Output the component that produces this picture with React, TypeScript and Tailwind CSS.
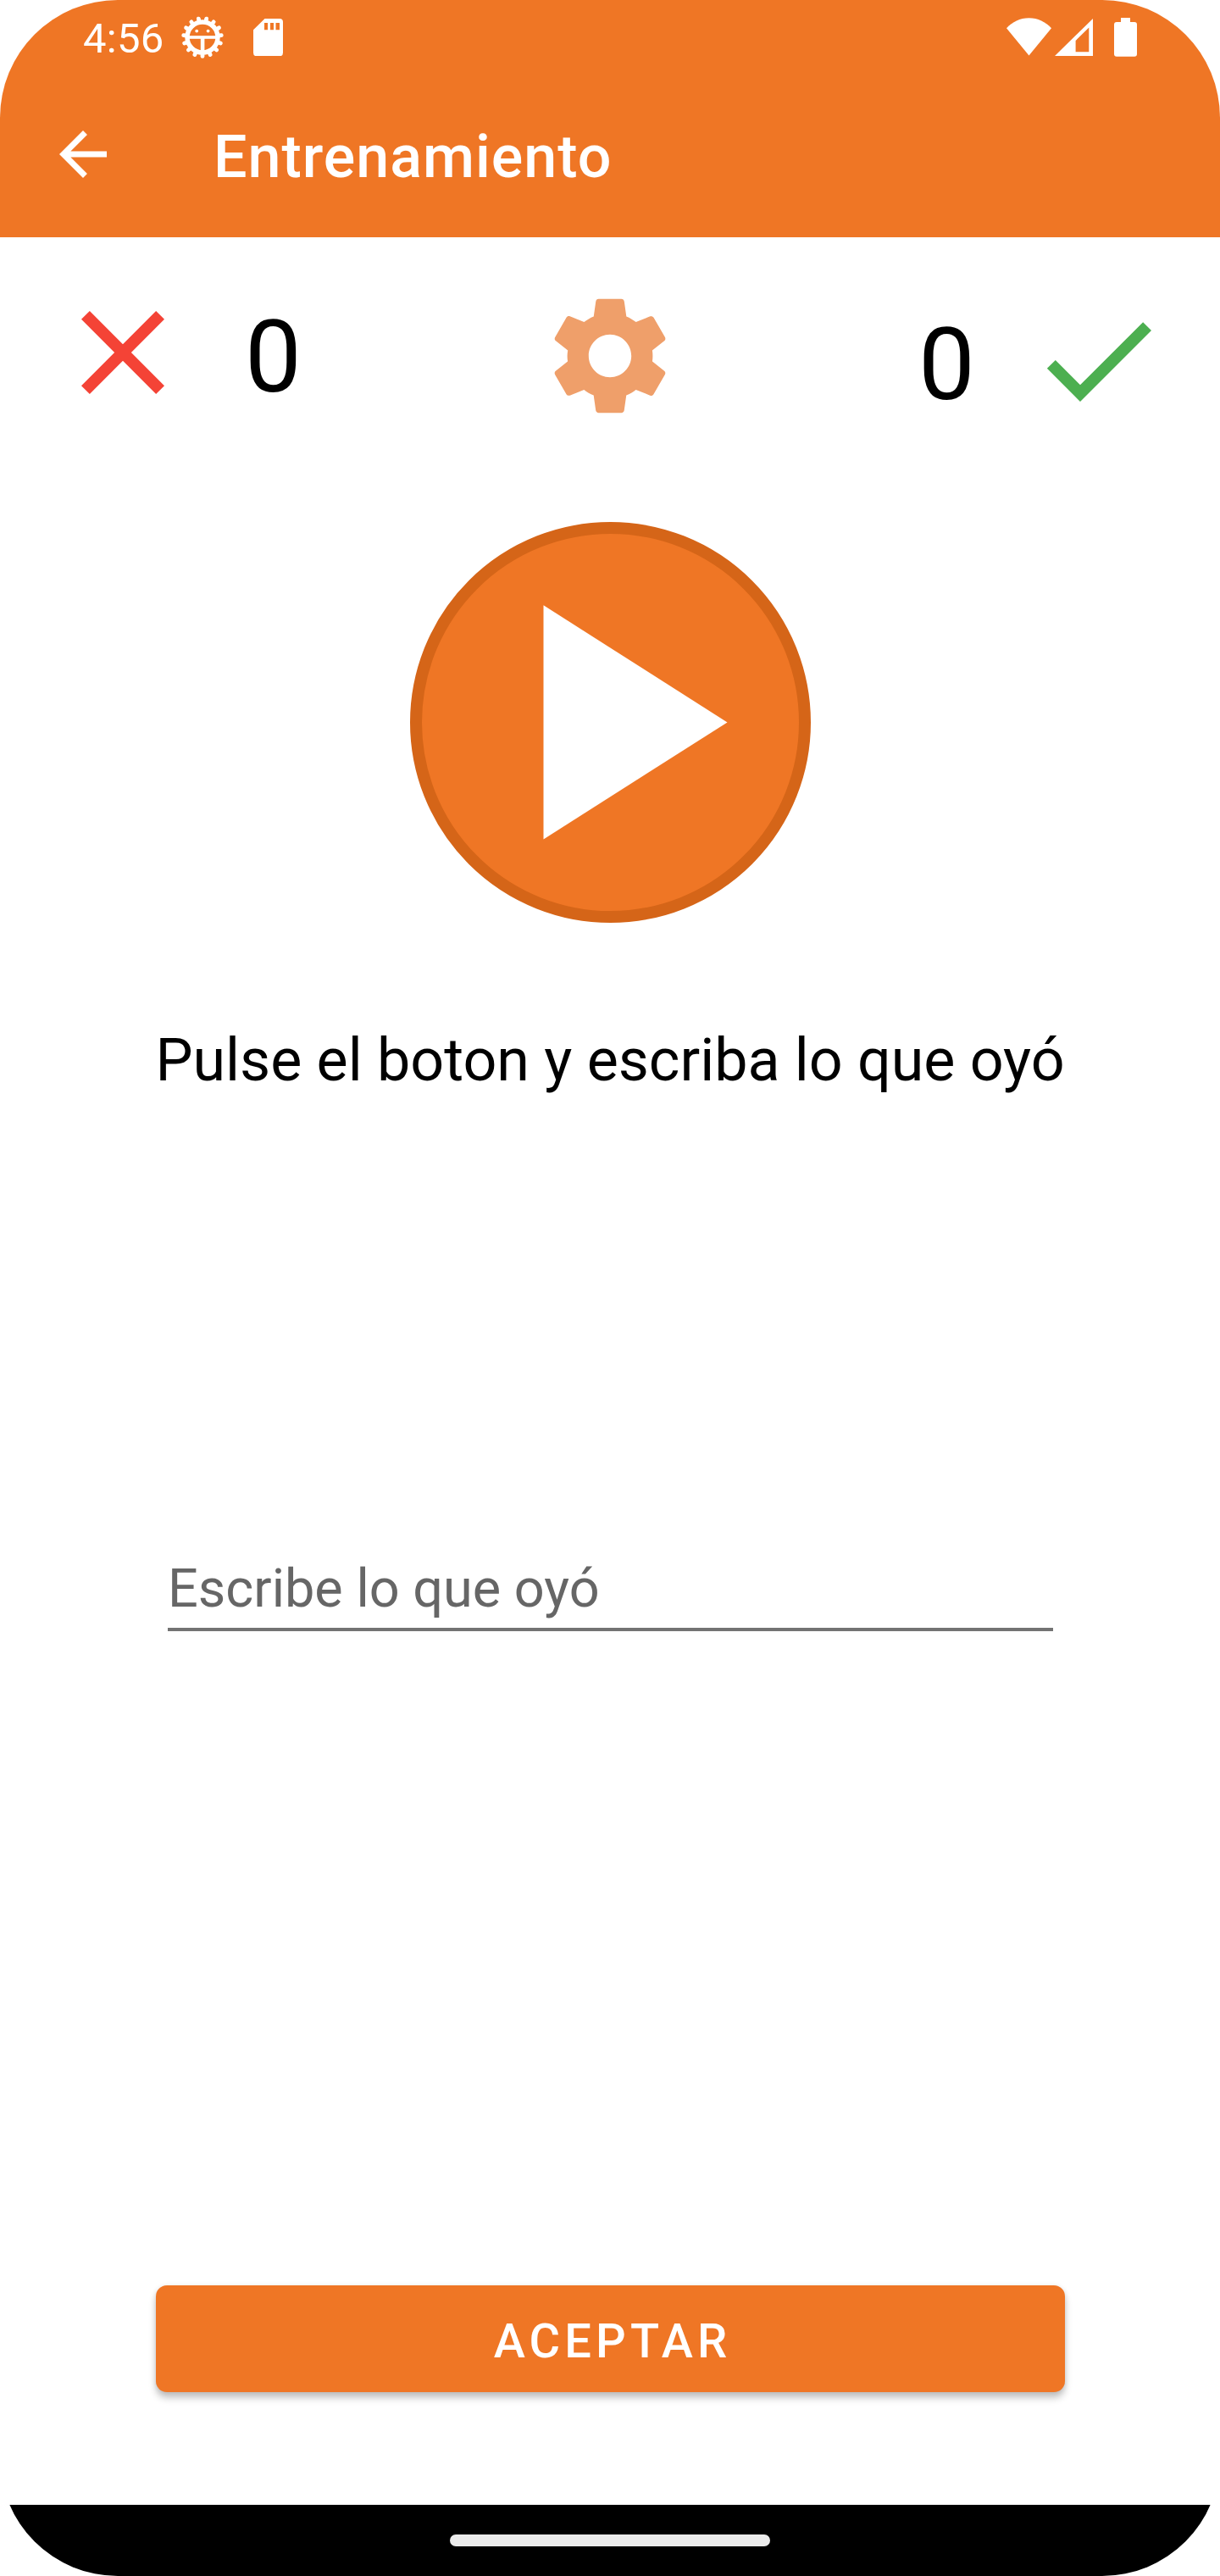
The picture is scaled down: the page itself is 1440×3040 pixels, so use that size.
import React from "react";

const GEAR_TEETH = Array.from({ length: 15 }, (_, i) => {
  const a = (i * 24 * Math.PI) / 180;
  return { x: 25 + 22.4 * Math.sin(a), y: 25 + 22.4 * Math.cos(a) };
});

function DebugGearIcon() {
  return (
    <svg className="mt-[19px] ml-[21px] h-[50px] w-[50px]" viewBox="0 0 50 50" fill="white">
      <circle cx="25" cy="25" r="18" fill="none" stroke="white" strokeWidth="5.4" />
      {GEAR_TEETH.map((t, i) => (
        <line key={i} x1={25 + (t.x - 25) * 0.82} y1={25 + (t.y - 25) * 0.82} x2={t.x} y2={t.y} stroke="white" strokeWidth="4.8" strokeLinecap="round" />
      ))}
      <rect x="8" y="23.2" width="34" height="3.6" />
      <rect x="22.8" y="25" width="4.6" height="17" />
      <circle cx="18.2" cy="17.6" r="1.9" />
      <circle cx="31.6" cy="17.6" r="1.9" />
    </svg>
  );
}

function SdCardIcon() {
  return (
    <svg className="mt-[22px] ml-[35px] h-[44px] w-[35px]" viewBox="0 0 35 44" fill="white">
      <path fillRule="evenodd" d="M13.5 0H31a4 4 0 0 1 4 4v36.3a4 4 0 0 1-4 4H4a4 4 0 0 1-4-4V13.3zM13 5v8.3h4V5zM20 5v8.3h4V5zM26.5 5v8.3h4.5V5z" />
    </svg>
  );
}

function StatusBar() {
  return (
    <div className="flex h-[84px] items-start pr-[98px] pl-[98px] text-white">
      <span className="mt-[16px] w-[95px] text-[49px] leading-[60px] tracking-[0.3px] whitespace-nowrap">4:56</span>
      <DebugGearIcon />
      <SdCardIcon />
      <svg className="mt-[21px] ml-auto h-[45px] w-[53px]" viewBox="0 0 53 45" fill="white">
        <path d="M0 12.3C7 4.6 16 .2 26.5 .2S46 4.6 53 12.3L26.5 44.5z" />
      </svg>
      <svg className="mt-[22px] ml-[4px] h-[44px] w-[45px]" viewBox="0 0 45 44" fill="white">
        <path fillRule="evenodd" d="M45 0V44H0zM40.3 10.5L24.6 26V39.3H40.3z" />
      </svg>
      <svg className="mt-[21px] ml-[25px] h-[46px] w-[27px]" viewBox="0 0 27 46" fill="white">
        <path d="M8 0H19V5H24a3 3 0 0 1 3 3V42.8a3 3 0 0 1-3 3H3a3 3 0 0 1-3-3V8a3 3 0 0 1 3-3H8z" />
      </svg>
    </div>
  );
}

function Toolbar() {
  return (
    <div className="flex h-[196px] items-center pl-[56px] text-white">
      <button className="h-[84px] w-[84px]" aria-label="Atrás">
        <svg className="h-full w-full" viewBox="0 0 24 24" fill="currentColor">
          <path d="M20 11H7.83l5.59-5.59L12 4l-8 8 8 8 1.41-1.41L7.83 13H20v-2z" />
        </svg>
      </button>
      <h1 className="ml-[112px] pt-[6px] text-[70px] leading-[84px] font-medium tracking-[0.98px]">Entrenamiento</h1>
    </div>
  );
}

function ScoreRow() {
  return (
    <div className="flex h-[229px] items-start pl-[61px]">
      <svg className="h-[168px] w-[168px]" viewBox="0 0 24 24" fill="#f44336">
        <path d="M19 6.41L17.59 5 12 10.59 6.41 5 5 6.41 10.59 12 5 17.59 6.41 19 12 13.41 17.59 19 19 17.59 13.41 12z" />
      </svg>
      <span className="mt-[20px] ml-[60px] w-[67px] text-[119px] leading-[140px]">0</span>
      <svg className="mt-[4px] ml-[280px] h-[168px] w-[168px]" viewBox="0 0 24 24" fill="#ef9f6a">
        <path d="M19.14 12.94c.04-.3.06-.61.06-.94 0-.32-.02-.64-.07-.94l2.03-1.58c.18-.14.23-.41.12-.61l-1.92-3.32c-.12-.22-.37-.29-.59-.22l-2.39.96c-.5-.38-1.03-.7-1.62-.94l-.36-2.54c-.04-.24-.24-.41-.48-.41h-3.84c-.24 0-.43.17-.47.41l-.36 2.54c-.59.24-1.13.57-1.62.94l-2.39-.96c-.22-.08-.47 0-.59.22L2.74 8.87c-.12.21-.08.47.12.61l2.03 1.58c-.05.3-.09.63-.09.94s.02.64.07.94l-2.03 1.58c-.18.14-.23.41-.12.61l1.92 3.32c.12.22.37.29.59.22l2.39-.96c.5.38 1.03.7 1.62.94l.36 2.54c.05.24.24.41.48.41h3.84c.24 0 .44-.17.47-.41l.36-2.54c.59-.24 1.13-.56 1.62-.94l2.39.96c.22.08.47 0 .59-.22l1.92-3.32c.12-.22.07-.47-.12-.61l-2.01-1.58zM12 15.6c-1.98 0-3.6-1.62-3.6-3.6s1.62-3.6 3.6-3.6 3.6 1.62 3.6 3.6-1.62 3.6-3.6 3.6z" />
      </svg>
      <span className="mt-[29px] ml-[280px] w-[67px] text-[119px] leading-[140px]">0</span>
      <svg className="mt-[9px] ml-[61px] h-[168px] w-[168px]" viewBox="0 0 24 24" fill="#4caf50">
        <path d="M9 16.17L4.83 12l-1.42 1.41L9 19 21 7l-1.41-1.41z" />
      </svg>
    </div>
  );
}

export default function App() {
  return (
    <div className="h-[3040px] w-[1440px] bg-white font-['Roboto',sans-serif] text-black">
      <div className="flex h-full flex-col overflow-hidden rounded-[139px] bg-white">
        <header className="h-[280px] shrink-0 bg-[#ef7625]">
          <StatusBar />
          <Toolbar />
        </header>
        <main className="flex grow flex-col pt-[52px]">
          <ScoreRow />
          <button className="mt-[55px] ml-[484px] h-[473px] w-[473px] rounded-full border-[14px] border-[#d56518] bg-[#ef7625]" aria-label="Reproducir">
            <svg className="h-full w-full" viewBox="0 0 445 445" fill="white">
              <path d="M143.5 84.3L360.5 222.5L143.5 360.5z" />
            </svg>
          </button>
          <p className="mt-[120px] self-center text-[70px] leading-[84px] tracking-[-0.03px] whitespace-nowrap">Pulse el boton y escriba lo que oyó</p>
          <input
            className="mt-[541px] ml-[198px] h-[91px] w-[1045px] border-b-4 border-[#737373] pb-[7px] text-[63px] leading-[76px] outline-none placeholder:text-[#666666] placeholder:opacity-100"
            placeholder="Escribe lo que oyó"
          />
          <button className="mt-auto mb-[133px] ml-[184px] h-[126px] w-[1073px] rounded-[13px] bg-[#ef7625] pt-[5px] pl-[5px] text-[56px] font-medium tracking-[5.15px] text-white shadow-[0_7px_9px_rgba(0,0,0,0.22),0_1px_6px_rgba(0,0,0,0.1)]">
            ACEPTAR
          </button>
        </main>
        <footer className="flex h-[84px] shrink-0 justify-center bg-black pt-[35px]">
          <div className="h-[14px] w-[378px] rounded-full bg-[#ebebeb]" />
        </footer>
      </div>
    </div>
  );
}
